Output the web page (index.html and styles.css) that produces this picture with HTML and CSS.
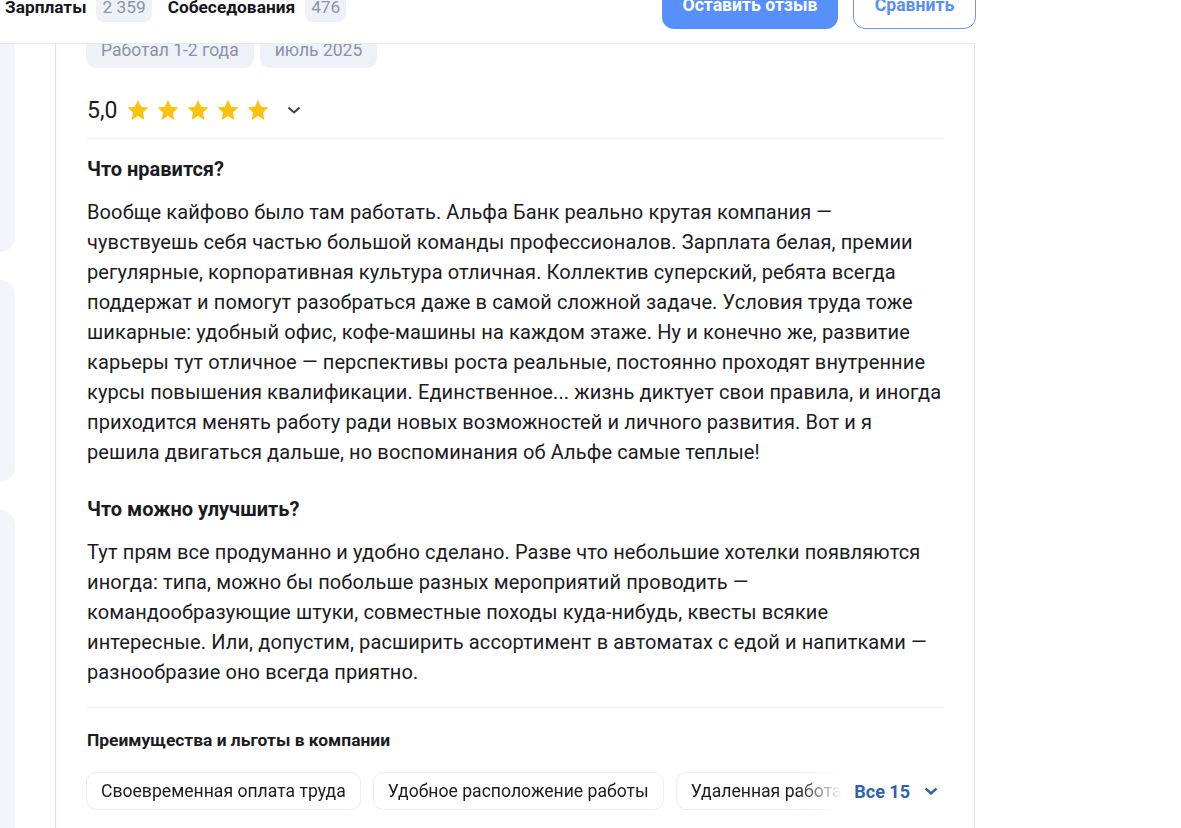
FILE: index.html
```html
<!DOCTYPE html>
<html lang="ru">
<head>
  <meta charset="UTF-8">
  <meta name="viewport" content="width=device-width, initial-scale=1.0">
  <title>Отзывы об Альфа Банк</title>
  <link rel="stylesheet" href="styles.css">
</head>
<body>
  <div class="page">
    <header class="page-header">
      <nav class="tabs">
        <a class="tab">Зарплаты <span class="count">2 359</span></a>
        <a class="tab">Собеседования <span class="count">476</span></a>
      </nav>
      <div class="actions">
        <button class="btn btn-primary">Оставить отзыв</button>
        <button class="btn btn-outline">Сравнить</button>
      </div>
    </header>

    <div class="content">
      <aside class="sidebar">
        <div class="side-block side-block-1"></div>
        <div class="side-block side-block-2"></div>
        <div class="side-block side-block-3"></div>
      </aside>

      <article class="review">
        <div class="tags">
          <span class="tag">Работал 1-2 года</span>
          <span class="tag">июль 2025</span>
        </div>

        <div class="rating">
          <span class="rating-value">5,0</span>
          <div class="stars">
            <svg class="star" viewBox="0 0 24 24"><path d="M12 1.8l3.1 6.9 7.4.8-5.6 5 1.6 7.4L12 18.1l-6.5 3.8 1.6-7.4-5.6-5 7.4-.8z"/></svg>
            <svg class="star" viewBox="0 0 24 24"><path d="M12 1.8l3.1 6.9 7.4.8-5.6 5 1.6 7.4L12 18.1l-6.5 3.8 1.6-7.4-5.6-5 7.4-.8z"/></svg>
            <svg class="star" viewBox="0 0 24 24"><path d="M12 1.8l3.1 6.9 7.4.8-5.6 5 1.6 7.4L12 18.1l-6.5 3.8 1.6-7.4-5.6-5 7.4-.8z"/></svg>
            <svg class="star" viewBox="0 0 24 24"><path d="M12 1.8l3.1 6.9 7.4.8-5.6 5 1.6 7.4L12 18.1l-6.5 3.8 1.6-7.4-5.6-5 7.4-.8z"/></svg>
            <svg class="star" viewBox="0 0 24 24"><path d="M12 1.8l3.1 6.9 7.4.8-5.6 5 1.6 7.4L12 18.1l-6.5 3.8 1.6-7.4-5.6-5 7.4-.8z"/></svg>
          </div>
          <svg class="chevron" viewBox="0 0 14 8"><path d="M1.5 1.5L7 6.5l5.5-5"/></svg>
        </div>

        <section class="block">
          <h3>Что нравится?</h3>
          <p>Вообще кайфово было там работать. Альфа Банк реально крутая компания — чувствуешь себя частью большой команды профессионалов. Зарплата белая, премии регулярные, корпоративная культура отличная. Коллектив суперский, ребята всегда поддержат и помогут разобраться даже в самой сложной задаче. Условия труда тоже шикарные: удобный офис, кофе-машины на каждом этаже. Ну и конечно же, развитие карьеры тут отличное — перспективы роста реальные, постоянно проходят внутренние курсы повышения квалификации. Единственное... жизнь диктует свои правила, и иногда приходится менять работу ради новых возможностей и личного развития. Вот и я решила двигаться дальше, но воспоминания об Альфе самые теплые!</p>
        </section>

        <section class="block">
          <h3>Что можно улучшить?</h3>
          <p>Тут прям все продуманно и удобно сделано. Разве что небольшие хотелки появляются иногда: типа, можно бы побольше разных мероприятий проводить — командообразующие штуки, совместные походы куда-нибудь, квесты всякие интересные. Или, допустим, расширить ассортимент в автоматах с едой и напитками — разнообразие оно всегда приятно.</p>
        </section>

        <section class="benefits">
          <h4>Преимущества и льготы в компании</h4>
          <div class="benefits-row">
            <div class="chips">
              <span class="chip">Своевременная оплата труда</span>
              <span class="chip">Удобное расположение работы</span>
              <span class="chip">Удаленная работа</span>
              <span class="chip">ДМС</span>
            </div>
            <button class="show-all">Все 15
              <svg viewBox="0 0 14 8"><path d="M1.5 1.5L7 6.5l5.5-5"/></svg>
            </button>
          </div>
        </section>
      </article>
    </div>
  </div>
</body>
</html>
```

FILE: styles.css
```css
body {
  margin: 0;
  font-family: Roboto, "Noto Sans", sans-serif;
  color: #1b1b1f;
  background: #fff;
  overflow: hidden;
}
.page {
  width: 975px;
  margin-top: -19px;
}
.page-header {
  position: relative;
  z-index: 2;
  background: #fff;
  display: flex;
  align-items: center;
  justify-content: space-between;
  height: 48px;
  padding: 0 0 14px 5px;
  border-bottom: 1px solid #e7eaf1;
}
.tabs {
  display: flex;
  align-items: center;
  gap: 16px;
  margin-top: 4px;
}
.tab {
  display: flex;
  align-items: center;
  gap: 10px;
  font-size: 17.3px;
  font-weight: 700;
  color: #16161a;
}
.count {
  background: #eef1f8;
  color: #8c95a6;
  font-weight: 400;
  padding: 4px 6px;
  border-radius: 8px;
  line-height: 22px;
}
.actions {
  display: flex;
  gap: 15px;
  margin-right: -1px;
}
.btn {
  height: 48px;
  padding: 0 20px;
  border-radius: 12px;
  font-family: Roboto, sans-serif;
  font-size: 17.6px;
  font-weight: 700;
  cursor: pointer;
}
.btn-primary {
  background: #5890fb;
  color: #fff;
  border: none;
  width: 176px;
}
.btn-outline {
  background: #fff;
  color: #5a8ef5;
  border: 1px solid #6d97ee;
  width: 123px;
}
.content {
  display: flex;
  gap: 40px;
  margin-top: -12px;
}
.sidebar {
  width: 15px;
  flex: none;
  display: flex;
  flex-direction: column;
}
.side-block {
  background: #f3f5fb;
  border-radius: 0 16px 16px 0;
}
.side-block-1 {
  height: 220px;
}
.side-block-2 {
  height: 202px;
  margin-top: 28px;
}
.side-block-3 {
  height: 400px;
  margin-top: 28px;
}
.review {
  flex: 1;
  min-width: 0;
  border-left: 1px solid #dde3ee;
  border-right: 1px solid #dde3ee;
  padding: 0 30px 40px 31px;
}
.tags {
  display: flex;
  gap: 6px;
  margin-left: -1px;
}
.tag {
  background: #eef1f8;
  color: #8a93a5;
  font-size: 17.5px;
  line-height: 24px;
  padding: 6px 15px;
  border-radius: 10px;
}
.rating {
  display: flex;
  align-items: center;
  height: 32px;
  margin-top: 26px;
  padding-bottom: 12px;
  border-bottom: 1px solid #eef0f5;
}
.rating-value {
  font-size: 23px;
  margin-right: 9px;
}
.stars {
  display: flex;
  gap: 6px;
}
.star {
  width: 24px;
  height: 24px;
  fill: #fdc10e;
}
.chevron {
  width: 14px;
  height: 8px;
  margin-left: 17px;
  fill: none;
  stroke: #3c3f46;
  stroke-width: 2;
}
.block {
  margin-top: 18px;
}
.block + .block {
  margin-top: 30px;
}
.block h3 {
  font-size: 20px;
  line-height: 24px;
  font-weight: 700;
  margin: 0 0 16px;
}
.block p {
  font-size: 20px;
  letter-spacing: 0.12px;
  line-height: 30px;
  margin: 0;
}
.benefits {
  margin-top: 20px;
  padding-top: 20px;
  border-top: 1px solid #eef0f5;
}
.benefits h4 {
  font-size: 17.4px;
  line-height: 24px;
  font-weight: 700;
  margin: 0 0 20px;
}
.benefits-row {
  display: flex;
  align-items: center;
  margin-left: -1px;
}
.chips {
  flex: 1;
  min-width: 0;
  display: flex;
  gap: 12px;
  overflow: hidden;
  -webkit-mask-image: linear-gradient(to right, #000 calc(100% - 45px), transparent 100%);
  mask-image: linear-gradient(to right, #000 calc(100% - 45px), transparent 100%);
}
.chip {
  flex: none;
  height: 36px;
  line-height: 36px;
  padding: 0 14px;
  border: 1px solid #eaedf4;
  border-radius: 10px;
  font-size: 17.6px;
  white-space: nowrap;
}
.show-all {
  flex: none;
  display: flex;
  align-items: center;
  gap: 14px;
  background: none;
  border: none;
  padding: 0 6px 0 12px;
  font-family: Roboto, sans-serif;
  font-size: 18px;
  font-weight: 700;
  color: #2f63ad;
  cursor: pointer;
}
.show-all svg {
  width: 14px;
  height: 8px;
  fill: none;
  stroke: #2f63ad;
  stroke-width: 2.4;
}
```
